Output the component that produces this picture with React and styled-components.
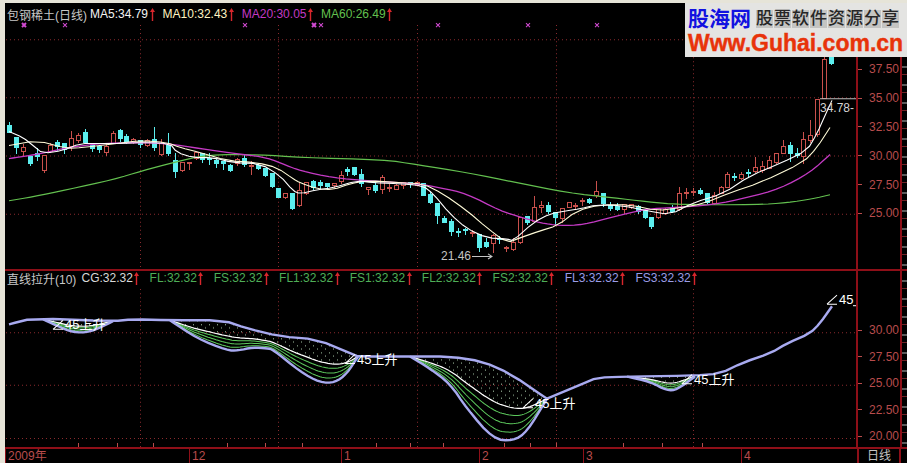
import React from "react";
import styled, { createGlobalStyle } from "styled-components";

const RED_LINE = "#8e0f18";
const AXIS_TEXT = "#b84c4c";
const GRID = "#8a2a2e";
const CANDLE_RED = "#c9504c";
const CANDLE_CYAN = "#5ceeee";
const THICK = "#a8aaf0";

// [rising, high, bodyTop, bodyBottom, low] in screen pixels
const candles = [
  [0,122,125,132,133],[0,137,137,147,153],[1,143,147,151,156],[0,154,156,163,165],[0,147,153,156,160],
  [1,154,155,170,172],[1,142,145,151,152],[0,139,142,146,150],[0,142,143,149,153],[1,131,138,146,150],
  [1,133,135,140,142],[0,129,132,142,143],[0,143,145,148,151],[0,144,146,149,152],[1,143,146,152,155],
  [1,131,133,143,143],[0,129,130,138,141],[0,134,136,142,143],[1,137,139,141,143],[0,139,140,144,147],
  [1,138,140,145,146],[0,127,139,147,150],[1,138,143,154,155],[0,133,145,153,155],[0,152,160,171,177],
  [1,162,162,170,171],[1,161,162,163,169],[1,152,152,158,159],[0,152,153,159,162],[0,152,158,159,164],
  [0,158,160,163,167],[0,160,161,163,169],[0,163,165,170,171],[1,157,159,163,165],[0,153,158,164,166],
  [1,160,165,166,174],[0,163,165,168,169],[0,167,168,175,176],[0,172,173,186,187],[0,187,188,197,197],
  [1,193,193,197,198],[0,193,193,208,209],[1,181,190,205,206],[1,181,182,193,194],[0,179,181,187,189],
  [0,179,182,185,188],[0,182,183,186,189],[1,182,183,185,187],[1,170,175,181,183],[0,166,169,171,175],
  [0,166,167,174,175],[0,168,174,183,186],[1,186,187,189,194],[0,181,185,190,192],[1,174,177,189,193],
  [1,183,187,188,191],[1,183,185,189,189],[1,182,182,185,188],[0,182,182,184,187],[1,180,182,185,185],
  [0,182,183,195,195],[0,191,194,202,203],[0,203,203,215,223],[0,215,218,222,222],[0,218,221,231,235],
  [0,227,231,232,236],[0,227,229,230,234],[1,229,232,233,236],[0,233,234,247,251],[0,237,242,246,247],
  [1,233,235,243,252],[0,235,238,239,243],[1,245,247,248,251],[1,237,242,249,250],[1,216,217,242,243],
  [0,215,216,222,224],[1,195,207,221,221],[1,200,205,207,212],[0,201,205,211,213],[0,211,212,217,224],
  [1,207,208,218,222],[1,202,202,207,207],[1,202,205,206,208],[1,197,200,201,205],[0,197,199,202,203],
  [1,180,191,195,197],[0,192,193,203,206],[0,201,205,208,210],[0,202,206,209,210],[1,203,204,209,213],
  [1,203,204,207,208],[0,204,206,211,213],[0,208,210,217,218],[0,216,217,226,228],[1,207,208,217,218],
  [1,207,209,213,214],[0,204,207,211,212],[1,186,193,209,210],[1,187,192,193,198],[1,187,191,192,195],
  [0,187,190,193,194],[0,193,193,202,203],[1,191,195,203,204],[1,185,187,193,193],[1,171,174,187,187],
  [0,172,176,177,180],[1,171,174,178,179],[0,168,172,173,176],[1,156,167,171,172],[1,160,166,170,172],
  [1,155,160,168,168],[1,153,153,162,163],[1,139,146,153,153],[0,141,145,153,161],[0,147,153,155,157],
  [1,132,139,156,163],[1,120,135,140,142],[1,99,99,134,136],[1,50,59,98,99],[0,28,50,63,65],
];

// corner cutting, the hand-read points are too angular otherwise
const smooth = (list, rounds = 2) => {
  let out = list;
  for (let r = 0; r < rounds; r++) {
    const next = [out[0]];
    for (let i = 0; i < out.length - 1; i++) {
      const [x0, y0] = out[i];
      const [x1, y1] = out[i + 1];
      next.push([x0 * 0.75 + x1 * 0.25, y0 * 0.75 + y1 * 0.25]);
      next.push([x0 * 0.25 + x1 * 0.75, y0 * 0.25 + y1 * 0.75]);
    }
    next.push(out[out.length - 1]);
    out = next;
  }
  return out;
};

const ma5 = smooth([[9,131],[23,137],[33,145],[43,153],[63,150],[80,143],[100,143],[120,143],[143,142],[170,143],[177,152],[193,157],[213,157],[233,162],[260,163],[280,175],[293,190],[300,193],[317,189],[333,187],[357,180],[373,182],[400,183],[423,185],[433,193],[450,213],[467,228],[487,237],[507,238],[513,240],[533,222],[550,213],[567,210],[580,208],[597,204],[623,205],[647,210],[670,214],[693,202],[723,193],[750,175],[780,163],[807,150],[817,133],[825,115],[832,100]], 1);
const ma10 = smooth([[9,145],[37,140],[67,148],[83,147],[117,143],[140,140],[167,142],[180,147],[200,152],[227,160],[257,162],[277,167],[293,178],[300,182],[317,188],[333,189],[350,183],[367,180],[400,182],[423,183],[443,193],[467,210],[487,227],[507,242],[520,237],[540,230],[557,225],[577,210],[600,204],[630,204],[657,210],[680,207],[703,203],[730,192],[760,182],[803,162],[817,147],[830,127]], 1);
const ma20 = smooth([[9,158],[30,155],[50,151],[67,147],[100,143],[133,142],[167,143],[200,148],[243,154],[267,157],[287,165],[300,170],[333,177],[367,180],[417,183],[440,187],[467,193],[500,210],[523,217],[540,222],[560,225],[583,224],[613,216],[647,208],[673,207],[713,204],[747,197],[780,188],[810,172],[830,154]]);
const ma60 = smooth([[9,200],[33,196],[67,189],[113,179],[143,170],[173,162],[207,154],[260,154],[300,157],[383,159],[417,164],[467,172],[517,182],[567,192],[613,197],[647,201],[680,204],[757,204],[787,202],[813,198],[830,194]]);

// the path turns sharply at 547, so each side is smoothed on its own
const rise = [
  ...smooth([[9,323],[33,317],[113,320],[133,318],[170,319],[223,319],[247,327],[280,335],[317,338],[353,353],[358,355],[410,355],[450,355],[483,360],[510,372],[547,397]], 1),
  ...smooth([[547,397],[583,382],[597,376],[627,375],[693,374],[720,372],[743,361],[770,352],[787,342],[810,332],[820,322],[832,305]], 1),
];
const troughs = [
  [[43,318],[58,325],[73,331],[90,331],[113,320]],
  [[170,319],[197,337],[227,349],[238,349],[253,346],[267,347],[273,348],[300,370],[320,381],[335,381],[347,372],[358,355]],
  [[410,355],[430,367],[450,382],[467,407],[493,437],[513,439],[527,430],[547,397]],
  [[627,375],[650,380],[667,389],[677,388],[695,375]],
].map((t) => smooth(t));

const upperMonths = [140, 278, 417, 556, 693];
const upperRows = [39, 97, 155, 213];
const lowerRows = [331, 383, 436];
const marks = [[24,1],[65,0],[245,0],[314,1],[321,0],[438,0],[528,0],[597,0]];
const smallTicks = [78,117,153,227,265,302,376,410,443,504,530,556,623,662,702];
const GREEN_STEPS = [0.62, 0.75, 0.88];

const toPoints = (list) => list.map(([x, y]) => `${x},${y}`).join(" ");

const valueAt = (list, x) => {
  for (let i = 1; i < list.length; i++) {
    if (x <= list[i][0]) {
      const [x0, y0] = list[i - 1];
      const [x1, y1] = list[i];
      return y0 + ((y1 - y0) * (x - x0)) / (x1 - x0 || 1);
    }
  }
  return list[list.length - 1][1];
};

// line at a given fraction of the way between the rise path and a trough
const between = (trough, part) => {
  const out = [];
  const start = trough[0][0];
  const end = trough[trough.length - 1][0];
  for (let x = start; x <= end; x += 2) {
    const top = valueAt(rise, x);
    out.push([x, top + (valueAt(trough, x) - top) * part]);
  }
  return out;
};

const GlobalStyle = createGlobalStyle`
  html, body {
    margin: 0;
    padding: 0;
    background: #000;
  }
`;

const Screen = styled.div`
  position: relative;
  width: 907px;
  height: 463px;
  overflow: hidden;
  background: #e6e4d8;
  font-family: "Liberation Sans", "Noto Sans CJK SC", sans-serif;
  font-size: 12px;
  padding: 3px 0 0 5px;
  box-sizing: border-box;
`;

const Terminal = styled.div`
  display: flex;
  flex-direction: column;
  height: 460px;
  background: #000;
`;

const Row = styled.div`
  display: flex;
  flex: none;
  height: ${(p) => p.$height}px;
  border-bottom: 2px solid ${RED_LINE};
`;

const Plot = styled.div`
  position: relative;
  flex: none;
  width: 851px;
  border-right: 2px solid ${RED_LINE};
`;

const Drawing = styled.svg`
  display: block;
  width: 851px;
  height: 100%;
`;

const Legend = styled.div`
  position: absolute;
  left: 2px;
  top: ${(p) => p.$top}px;
  display: flex;
  align-items: center;
  gap: ${(p) => p.$gap}px;
  height: 16px;
  white-space: nowrap;
`;

const LegendTitle = styled.span`
  color: #c8c8c8;
  margin-right: -5px;
`;

const LegendItem = styled.span`
  display: flex;
  align-items: center;
  gap: 1.5px;
  color: ${(p) => p.$color};
`;

const ArrowIcon = styled.svg`
  width: 5px;
  height: 13px;
  flex: none;
`;

const PriceAxis = styled.div`
  flex: none;
  width: 42px;
  padding-top: ${(p) => p.$top}px;
  border-right: 2px solid ${RED_LINE};
  color: ${AXIS_TEXT};
`;

const Tick = styled.div`
  display: flex;
  align-items: center;
  justify-content: flex-end;
  height: ${(p) => p.$height}px;
  padding-right: 1px;

  &::before {
    content: "";
    width: 4px;
    height: 1px;
    margin-right: auto;
    background: ${AXIS_TEXT};
  }
`;

const Tail = styled.div`
  flex: 1;
  background: repeating-linear-gradient(
    to bottom,
    #000 0 9px,
    #5a5a5a 9px 11px,
    #000 11px 17px,
    #6e2226 17px 18px
  );
`;

const TimeAxis = styled.div`
  display: flex;
  flex: none;
  height: 15px;
  border-bottom: 1px solid ${RED_LINE};
  color: ${AXIS_TEXT};
`;

const TimeCell = styled.div`
  flex: none;
  box-sizing: border-box;
  width: ${(p) => p.$width}px;
  padding-left: 2px;
  line-height: 15px;
  border-left: 1px solid ${RED_LINE};
`;

const PeriodCell = styled.div`
  flex: none;
  box-sizing: border-box;
  width: 44px;
  padding-left: 8px;
  line-height: 15px;
  color: #c4c4c4;
  border-left: 2px solid ${RED_LINE};
  border-right: 2px solid ${RED_LINE};
`;

const Scrollbar = styled.div`
  height: 1px;
  margin-left: 32px;
  width: 26px;
  background: #8a8a8a;
`;

const Logo = styled.div`
  position: absolute;
  top: 3px;
  right: 0;
  width: 222px;
  height: 54px;
  box-sizing: border-box;
  padding: 3px 0 0 3px;
  background: #e4e4e2;
`;

const LogoTop = styled.div`
  display: flex;
  align-items: center;
  gap: 5px;
  height: 25px;
`;

const LogoName = styled.span`
  color: #1212e0;
  font-size: 21px;
  font-weight: 700;
  line-height: 25px;
`;

const Slogan = styled.div`
  display: flex;
  gap: 1px;
`;

const SloganChar = styled.span`
  width: 17px;
  height: 18px;
  background: #c4c4c2;
  color: #262626;
  font-size: 17px;
  font-weight: 500;
  line-height: 18px;
  text-align: center;
`;

const LogoSite = styled.div`
  color: #e8330a;
  font-size: 23px;
  font-weight: 700;
  line-height: 24px;
  -webkit-text-stroke: 0.4px #e8330a;
`;

const ChartText = styled.text`
  font-family: "Liberation Sans", "Noto Sans CJK SC", sans-serif;
  font-size: ${(p) => p.$size || 13}px;
  fill: ${(p) => p.$color || "#ffffff"};
`;

const Arrow = () => (
  <ArrowIcon viewBox="0 0 5 13">
    <path d="M2.5 0 L5 4 H3.2 V13 H1.8 V4 H0 Z" fill="#d8262c" />
  </ArrowIcon>
);

const Value = ({ label, color }) => (
  <LegendItem $color={color}>
    {label}
    <Arrow />
  </LegendItem>
);

const Grid = ({ rows, top, bottom }) => (
  <g stroke={GRID} strokeDasharray="1 3" fill="none">
    {rows.map((y) => (
      <line key={y} x1="6" x2="856" y1={y + 0.5} y2={y + 0.5} />
    ))}
    {upperMonths.map((x) => (
      <line key={x} x1={x + 0.5} x2={x + 0.5} y1={top} y2={bottom} />
    ))}
  </g>
);

const Candle = ({ data, index }) => {
  const [up, high, top, bottom, low] = data;
  const x = Math.round(9 + index * 6.908) + 0.5;
  const color = up ? CANDLE_RED : CANDLE_CYAN;
  return (
    <g shapeRendering="crispEdges" stroke={color}>
      <line x1={x} x2={x} y1={high} y2={top} />
      <line x1={x} x2={x} y1={bottom} y2={low} />
      <rect x={x - 2} y={top} width="4" height={Math.max(bottom - top, 1)} fill={up ? "#000" : color} />
    </g>
  );
};

const Angle = ({ x, y, text }) => (
  <g>
    <path d={`M${x} ${y + 4} L${x + 10} ${y - 5} M${x} ${y + 4} H${x + 10}`} stroke="#fff" fill="none" />
    <ChartText x={x + 12} y={y + 4}>{text}</ChartText>
  </g>
);

const PriceChart = () => (
  <Drawing viewBox="5 3 851 265" preserveAspectRatio="none">
    <Grid rows={upperRows} top={25} bottom={268} />
    {marks.map(([x, bold]) => (
      <path
        key={x}
        d={`M${x - 2} 23 L${x + 2} 27 M${x + 2} 23 L${x - 2} 27`}
        stroke="#d24ad2"
        strokeWidth={bold ? 2 : 1}
        fill="none"
      />
    ))}
    {candles.map((c, i) => (
      <Candle key={i} data={c} index={i} />
    ))}
    <polyline points={toPoints(ma60)} fill="none" stroke="#63c04f" strokeWidth="1.2" />
    <polyline points={toPoints(ma20)} fill="none" stroke="#c43ac4" strokeWidth="1.3" />
    <polyline points={toPoints(ma10)} fill="none" stroke="#fffbd8" strokeWidth="1.1" />
    <polyline points={toPoints(ma5)} fill="none" stroke="#ffffff" strokeWidth="1.1" />
    <line x1="820" x2="856" y1="98.5" y2="98.5" stroke="#bcbcbc" />
    <ChartText x="820" y="112" $size={12} $color="#d4d4d4">34.78-</ChartText>
    <ChartText x="441" y="259" $size={12} $color="#c4c4c4">21.46</ChartText>
    <path d="M472 255.5 H492 M488 253 L492 255.5 L488 258" stroke="#c4c4c4" fill="none" />
  </Drawing>
);

const RiseChart = () => (
  <Drawing viewBox="5 270 851 175" preserveAspectRatio="none">
    <defs>
      <pattern id="dots" width="8" height="7" patternUnits="userSpaceOnUse">
        <rect x="1" y="1" width="1" height="1" fill="#a8c8a8" />
        <rect x="5" y="4" width="1" height="1" fill="#a8c8a8" />
      </pattern>
    </defs>
    <Grid rows={lowerRows} top={288} bottom={445} />
    {smallTicks.map((x) => (
      <line key={x} x1={x + 0.5} x2={x + 0.5} y1="441" y2="445" stroke={AXIS_TEXT} />
    ))}
    {troughs.map((t, i) => {
      const white = between(t, 0.5);
      const top = between(t, 0);
      return (
        <g key={i} fill="none">
          <polygon points={toPoints([...top, ...white.slice().reverse()])} fill="url(#dots)" />
          {GREEN_STEPS.map((part) => (
            <polyline key={part} points={toPoints(between(t, part))} stroke="#5cc85c" />
          ))}
          <polyline points={toPoints(white)} stroke="#ffffff" strokeWidth="1.2" />
          <polyline points={toPoints(t)} stroke={THICK} strokeWidth="2.4" />
        </g>
      );
    })}
    <polyline points={toPoints(rise)} fill="none" stroke={THICK} strokeWidth="2.4" />
    <Angle x={53} y={324} text="45上升" />
    <Angle x={345} y={358} text="45上升" />
    <Angle x={523} y={402} text="45上升" />
    <Angle x={682} y={378} text="45上升" />
    <Angle x={827} y={299} text="45" />
    <path d="M853 304.5 H856" stroke="#fff" />
  </Drawing>
);

const months = [
  { width: 184, label: "2009年" },
  { width: 152, label: "12" },
  { width: 138, label: "1" },
  { width: 104, label: "2" },
  { width: 158, label: "3" },
  { width: 116, label: "4" },
];

const App = () => (
  <Screen>
    <GlobalStyle />
    <Terminal>
      <Row $height={266}>
        <Plot>
          <PriceChart />
          <Legend $top={3} $gap={8}>
            <LegendTitle>包钢稀土(日线)</LegendTitle>
            <Value label="MA5:34.79" color="#f4f4f4" />
            <Value label="MA10:32.43" color="#fff3c0" />
            <Value label="MA20:30.05" color="#c43ac4" />
            <Value label="MA60:26.49" color="#63c04f" />
          </Legend>
        </Plot>
        <PriceAxis $top={52}>
          {["37.50", "35.00", "32.50", "30.00", "27.50", "25.00"].map((v) => (
            <Tick key={v} $height={28.8}>{v}</Tick>
          ))}
        </PriceAxis>
        <Tail />
      </Row>
      <Row $height={176}>
        <Plot>
          <RiseChart />
          <Legend $top={-1} $gap={10.2}>
            <LegendTitle>直线拉升(10)</LegendTitle>
            <Value label="CG:32.32" color="#d8d8d8" />
            <Value label="FL:32.32" color="#4fae57" />
            <Value label="FS:32.32" color="#4fae57" />
            <Value label="FL1:32.32" color="#4fae57" />
            <Value label="FS1:32.32" color="#4fae57" />
            <Value label="FL2:32.32" color="#4fae57" />
            <Value label="FS2:32.32" color="#4fae57" />
            <Value label="FL3:32.32" color="#9a9ce6" />
            <Value label="FS3:32.32" color="#9a9ce6" />
          </Legend>
        </Plot>
        <PriceAxis $top={46}>
          {["30.00", "27.50", "25.00", "22.50", "20.00"].map((v) => (
            <Tick key={v} $height={26.5}>{v}</Tick>
          ))}
        </PriceAxis>
        <Tail />
      </Row>
      <TimeAxis>
        {months.map((m) => (
          <TimeCell key={m.label} $width={m.width}>{m.label}</TimeCell>
        ))}
        <PeriodCell>日线</PeriodCell>
      </TimeAxis>
      <Scrollbar />
    </Terminal>
    <Logo>
      <LogoTop>
        <LogoName>股海网</LogoName>
        <Slogan>
          {"股票软件资源分享".split("").map((c, i) => (
            <SloganChar key={i}>{c}</SloganChar>
          ))}
        </Slogan>
      </LogoTop>
      <LogoSite>Www.Guhai.com.cn</LogoSite>
    </Logo>
  </Screen>
);

export default App;
